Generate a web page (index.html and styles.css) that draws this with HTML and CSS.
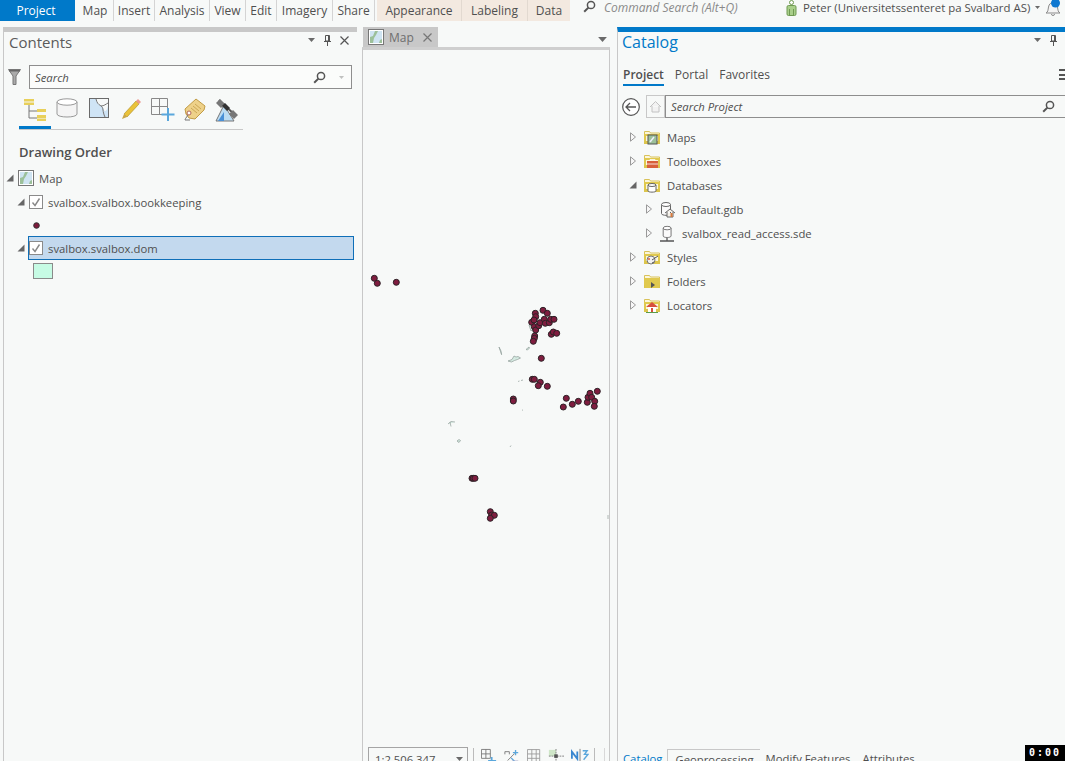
FILE: index.html
```html
<!DOCTYPE html>
<html lang="en">
<head>
    <meta charset="UTF-8">
    <title>ArcGIS Pro</title>
    <link rel="stylesheet" href="styles.css">
</head>
<body>
    <!-- shared icons -->
    <svg class="sprite" width="0" height="0">
        <symbol id="mapdoc" viewBox="0 0 16 16">
            <rect x=".5" y=".5" width="15" height="15" fill="#fff" stroke="#777"/>
            <rect x="2" y="2" width="12" height="12" fill="#cfe4f2"/>
            <path d="M2 14V8l3-1 2-5h3L8 6 6 9l-1 5z" fill="#9cc09a"/>
            <path d="M11 14l1-3 2-1v4z" fill="#9cc09a"/>
        </symbol>
        <symbol id="folder" viewBox="0 0 16 16">
            <path d="M.5 2.5h5l1 1.5h9v10H.5z" fill="#fbf6dc" stroke="#d9c25a"/>
            <path d="M1 6h14v8H1z" fill="none" stroke="#e0c94e" stroke-width="2"/>
            <path d="M0 12h16v3H0z" fill="#dcc54c"/>
        </symbol>
        <symbol id="db" viewBox="0 0 16 16">
            <path d="M2.5 3.5v9c0 2.4 9 2.4 9 0v-9" fill="#fafafa" stroke="#666"/>
            <ellipse cx="7" cy="3.5" rx="4.5" ry="2" fill="#fff" stroke="#666"/>
        </symbol>
        <symbol id="tri-open" viewBox="0 0 8 8"><path d="M7.5 .5v7h-7z" fill="#666"/></symbol>
        <symbol id="tri-closed" viewBox="0 0 8 10"><path d="M1.5 .8l5 4.2-5 4.2z" fill="#f7f7f7" stroke="#999"/></symbol>
        <symbol id="lens" viewBox="0 0 13 13"><circle cx="8" cy="5" r="3.6" fill="none" stroke="#555" stroke-width="1.5"/><path d="M5.4 7.6L1.2 11.8" stroke="#555" stroke-width="2"/></symbol>
        <symbol id="check" viewBox="0 0 14 14"><rect x=".5" y=".5" width="13" height="13" fill="#fff" stroke="#8a8a8a"/><path d="M3.500 7.500l2.500 3 4.500-7" fill="none" stroke="#888" stroke-width="1.400"/></symbol>
        <symbol id="caret" viewBox="0 0 7 4"><path d="M0 0h7L3.500 4z" fill="#6a6a6a"/></symbol>
        <symbol id="pin" viewBox="0 0 7 11"><path d="M1.500 .5h4v5.500h-4zM0 6.500h7M3.500 7v4M4.500 1v5" fill="none" stroke="#555"/></symbol>
    </svg>

    <header class="ribbon">
        <div class="tab-project">Project</div>
        <nav class="ribbon-tabs">
            <span class="rtab">Map</span>
            <span class="rtab">Insert</span>
            <span class="rtab">Analysis</span>
            <span class="rtab">View</span>
            <span class="rtab">Edit</span>
            <span class="rtab">Imagery</span>
            <span class="rtab">Share</span>
        </nav>
        <nav class="context-tabs">
            <span class="ctab">Appearance</span>
            <span class="ctab">Labeling</span>
            <span class="ctab">Data</span>
        </nav>
        <div class="command-search">
            <svg width="13" height="13"><use href="#lens"/></svg>
            <span>Command Search (Alt+Q)</span>
        </div>
        <div class="user">
            <svg width="11" height="16" viewBox="0 0 11 16"><circle cx="5.500" cy="2.500" r="2" fill="#fff" stroke="#6f9a52"/><rect x="1" y="5.500" width="9" height="10" rx="1.500" fill="#a9cf8a" stroke="#6f9a52"/><path d="M3.500 9v6M7.500 9v6" stroke="#6f9a52"/></svg>
            <span>Peter (Universitetssenteret pa Svalbard AS)</span>
            <svg class="user-caret" width="5" height="3"><use href="#caret"/></svg>
        </div>
        <div class="bell">
            <svg width="17" height="16" viewBox="0 0 17 16"><path d="M1 13c2-1 2-3 2.500-6S6 2.500 8 2.500 12 4 12.500 7s.5 5 2.500 6z" fill="#f4f4f4" stroke="#8a8a8a"/><path d="M6.500 14a1.500 1.500 0 0 0 3 0" fill="none" stroke="#8a8a8a"/><circle cx="10.500" cy="3" r="4.500" fill="#0f78d0"/></svg>
        </div>
    </header>

    <main class="panes">
        <section class="pane contents">
            <div class="pane-head">
                <h2 class="pane-title">Contents</h2>
                <div class="pane-tools">
                    <svg width="7" height="4"><use href="#caret"/></svg>
                    <svg width="7" height="11"><use href="#pin"/></svg>
                    <svg width="9" height="9" viewBox="0 0 9 9"><path d="M.5 .5l8 8M8.500 .5l-8 8" stroke="#555" stroke-width="1.200"/></svg>
                </div>
            </div>
            <div class="filter-row">
                <svg width="13" height="16" viewBox="0 0 13 16"><path d="M.5 .5h12L8 7v8.500H5V7z" fill="#aaa" stroke="#777"/><path d="M1 1h11v1.500H1z" fill="#666"/></svg>
                <div class="searchbox">
                    <span class="search-text">Search</span>
                    <svg class="search-lens" width="13" height="13"><use href="#lens"/></svg>
                    <svg class="search-caret" width="5" height="3"><use href="#caret"/></svg>
                </div>
            </div>
            <div class="toc-tools">
                <span class="toc-tool toc-active"><svg width="23" height="24" viewBox="0 0 23 24"><path d="M5 7v13h8M5 13h8" fill="none" stroke="#777"/><path d="M0 1h10v2.500H0zM0 4.500h10V7H0z" fill="#e8d05a"/><path d="M13 11h9v3h-9zM13 17h9v3h-9zM13 20.500h9v2.500h-9z" fill="#e8d05a"/></svg></span>
                <span class="toc-tool"><svg width="22" height="20" viewBox="0 0 22 20"><path d="M1 4v12c0 4 20 4 20 0V4" fill="#f4f4f4" stroke="#999"/><ellipse cx="11" cy="4" rx="10" ry="3.200" fill="#fff" stroke="#999"/></svg></span>
                <span class="toc-tool"><svg width="20" height="20" viewBox="0 0 20 20"><rect x=".5" y=".5" width="19" height="19" fill="#cfe4f5" stroke="#6a6a6a"/><path d="M7 1c1 4 2 5 5 7s3 3 3 4 3 3 4-5V1z" fill="#f7f9f8"/><path d="M7 1c1 4 2 5 5 7 3 2 1 5 4 11M12 8c3 0 5-2 7-3" fill="none" stroke="#777"/></svg></span>
                <span class="toc-tool"><svg width="21" height="22" viewBox="0 0 21 22"><path d="M3 16L15 3l3 3L6 19z" fill="#eac23a" stroke="#a98a20" stroke-width=".6"/><path d="M15 3l2-2 3 3-2 2z" fill="#eb9a8f"/><path d="M3 16l-2 5 5-2z" fill="#caa74a"/></svg></span>
                <span class="toc-tool"><svg width="24" height="23" viewBox="0 0 24 23"><path d="M.5 .5h16v16H.5zM8.500 .5v16M.5 8.500h16" fill="#f7f9f8" stroke="#888"/><path d="M17 10v13M10.500 16.500h13" stroke="#5aa7dc" stroke-width="2"/></svg></span>
                <span class="toc-tool"><svg width="22" height="23" viewBox="0 0 22 23"><path d="M1 11L12 1l9 7-1 4-9 9-6-1-3-4z" fill="#eed189" stroke="#c19c46"/><path d="M11 6l6 5M9 8l6 5M7 10l6 5" stroke="#c19c46" stroke-width=".8"/><circle cx="5" cy="15" r="2" fill="#fff" stroke="#b0655a"/><path d="M4 17c-2 3-3 4-3 5h5" fill="none" stroke="#777"/></svg></span>
                <span class="toc-tool"><svg width="24" height="24" viewBox="0 0 24 24"><path d="M1 23L9 7l10 16z" fill="#bcdcf2" stroke="#777"/><path d="M3 23l6-9v9z" fill="#4a90d6"/><path d="M4 2l16 15" stroke="#555" stroke-width="2"/><path d="M5 1L1 5l5 5 4-4zM18 12l-4 4 5 5 4-4z" fill="#777"/><path d="M10 5l5 5-3 3-5-5z" fill="#333"/></svg></span>
            </div>
            <h3 class="order-title">Drawing Order</h3>
            <ul class="toc-tree">
                <li class="toc-row toc-map">
                    <svg class="tri" width="8" height="8"><use href="#tri-open"/></svg>
                    <svg width="16" height="16"><use href="#mapdoc"/></svg>
                    <span>Map</span>
                </li>
                <li class="toc-row toc-layer">
                    <svg class="tri" width="8" height="8"><use href="#tri-open"/></svg>
                    <svg width="14" height="14"><use href="#check"/></svg>
                    <span>svalbox.svalbox.bookkeeping</span>
                </li>
                <li class="toc-symbol">
                    <svg width="7" height="7" viewBox="0 0 7 7"><circle cx="3.500" cy="3.500" r="2.800" fill="#7d1a3c" stroke="#333"/></svg>
                </li>
                <li class="toc-row toc-layer toc-selected">
                    <svg class="tri" width="8" height="8"><use href="#tri-open"/></svg>
                    <svg width="14" height="14"><use href="#check"/></svg>
                    <span>svalbox.svalbox.dom</span>
                </li>
                <li class="toc-swatch"><span class="swatch"></span></li>
            </ul>
        </section>

        <section class="mapview">
            <div class="view-tabs">
                <div class="view-tab">
                    <svg width="16" height="16"><use href="#mapdoc"/></svg>
                    <span>Map</span>
                    <svg class="view-close" width="9" height="9" viewBox="0 0 9 9"><path d="M.5 .5l8 8M8.500 .5l-8 8" stroke="#777" stroke-width="1.200"/></svg>
                </div>
                <svg class="view-caret" width="9" height="5"><use href="#caret"/></svg>
            </div>
            <div class="view-frame">
                <svg class="map-canvas" width="246" height="695" viewBox="363 50 246 695">
                    <g fill="#d5ebe2" stroke="#8f9c98" stroke-width=".7">
                        <path d="M499 347l2 4 .6 3.700-1.200-3.500z"/>
                        <path d="M508 361l4-1.500 2-3.500 2 1 2-.5 2.500 1.500-3 1.500-3 1-3 1.500z"/>
                        <path d="M526 349.500l3-2.500.5 1-2 2z"/>
                        <path d="M529 325l3-2 1 6-2 2z"/>
                        <path d="M518 381.500l1.500-.5M521 380.500l2-.5"/>
                        <path d="M522 410.500l1-.8"/>
                        <path d="M448 424l3-2.500 4 .5M450 422l1 4.500"/>
                        <path d="M457 441l2-1.500 1.500 1-1.500 2z"/>
                        <path d="M510 447l1-1.500"/>
                        <path d="M608 515v4"/>
                    </g>
                    <g fill="#7f1d3f" stroke="#2c2226">
                        <circle cx="374.300" cy="278.300" r="3"/><circle cx="377.300" cy="283.300" r="3"/><circle cx="396.300" cy="282.300" r="3"/>
                        <circle cx="535.300" cy="313.300" r="3"/><circle cx="535.700" cy="316.700" r="3"/><circle cx="543" cy="310.300" r="3"/><circle cx="547.300" cy="313.300" r="3"/>
                        <circle cx="531.700" cy="322.300" r="3"/><circle cx="534.300" cy="326.700" r="3"/><circle cx="535.700" cy="330" r="3"/><circle cx="538.700" cy="325.700" r="3"/>
                        <circle cx="540" cy="322.700" r="3"/><circle cx="544.300" cy="319.300" r="3"/><circle cx="545.300" cy="323.300" r="3"/><circle cx="549.300" cy="322.700" r="3"/>
                        <circle cx="550.700" cy="319.300" r="3"/><circle cx="554" cy="319.300" r="3"/><circle cx="534" cy="320" r="3"/>
                        <circle cx="551.300" cy="334.300" r="3"/><circle cx="553.300" cy="332" r="3"/><circle cx="556.700" cy="333.300" r="3"/>
                        <circle cx="534.700" cy="336" r="3"/><circle cx="534.300" cy="338.300" r="3"/><circle cx="533.300" cy="341.300" r="3"/>
                        <circle cx="541.300" cy="358.300" r="3"/>
                        <circle cx="532.300" cy="379.300" r="3"/><circle cx="534.300" cy="379.300" r="3"/><circle cx="540.300" cy="382.300" r="3"/><circle cx="538.300" cy="385.700" r="3"/><circle cx="547.300" cy="386.300" r="3"/>
                        <circle cx="513.300" cy="399" r="3"/><circle cx="513.300" cy="401" r="3"/>
                        <circle cx="566.300" cy="398.300" r="3"/><circle cx="563.300" cy="407" r="3"/><circle cx="572.300" cy="404.300" r="3"/><circle cx="578.300" cy="401.300" r="3"/>
                        <circle cx="587.300" cy="402.300" r="3"/><circle cx="588" cy="397.300" r="3"/><circle cx="590" cy="393.300" r="3"/><circle cx="591.700" cy="397.300" r="3"/>
                        <circle cx="597.300" cy="391.300" r="3"/><circle cx="594.700" cy="401.300" r="3"/><circle cx="594.300" cy="406.300" r="3"/>
                        <circle cx="472" cy="478.300" r="3"/><circle cx="473.300" cy="478.300" r="3"/><circle cx="475" cy="478.300" r="3"/>
                        <circle cx="490.300" cy="511.700" r="3"/><circle cx="491.700" cy="515" r="3"/><circle cx="494.300" cy="515.300" r="3"/><circle cx="490.300" cy="518.300" r="3"/>
                    </g>
                </svg>
                <div class="map-status">
                    <div class="scale-box"><span>1:2,506,347</span><svg width="7" height="4"><use href="#caret"/></svg></div>
                    <span class="status-sep"></span>
                    <svg width="16" height="18" viewBox="0 0 18 18"><path d="M.5 .5h10v10H.5zM5.500 .5v10M.5 5.500h10" fill="none" stroke="#777"/><path d="M12 9v9M8 13.500h9" stroke="#5aa7dc" stroke-width="2"/></svg>
                    <svg width="16" height="18" viewBox="0 0 18 18"><path d="M1 3h5M1 3v3M6 3v3M4 13l8-8" fill="none" stroke="#777"/><path d="M8 10l4 4M13 1v6M10 4h6" stroke="#5aa7dc" stroke-width="1.500"/><path d="M9 13h7v3H9z" fill="#aac"/></svg>
                    <svg width="14" height="18" viewBox="0 0 16 18"><path d="M.5 .5h14v14H.5zM5.500 .5v14M10.500 .5v14M.5 5.500h14M.5 10.500h14" fill="none" stroke="#999"/></svg>
                    <svg width="16" height="18" viewBox="0 0 18 18"><path d="M1 1h8v7H1z" fill="#cfe6c8"/><path d="M9 0v8M1 8h17M9 8v8" stroke="#777" stroke-dasharray="2 1"/><path d="M7 6h4v4H7z" fill="#555"/></svg>
                    <svg width="18" height="18" viewBox="0 0 20 18"><path d="M1 11V3l6 8V3" fill="none" stroke="#3a87d0" stroke-width="2"/><path d="M10 0v18" stroke="#777"/><path d="M13 2h5l-3 4h4l-5 6" fill="none" stroke="#5aa7dc" stroke-width="1.500"/></svg>
                    <span class="status-sep"></span>
                    <span class="status-sep status-faint"></span>
                </div>
            </div>
        </section>

        <section class="pane catalog">
            <div class="pane-head">
                <h2 class="pane-title catalog-title">Catalog</h2>
                <div class="pane-tools">
                    <svg width="7" height="4"><use href="#caret"/></svg>
                    <svg width="7" height="11"><use href="#pin"/></svg>
                </div>
            </div>
            <div class="cat-tabs">
                <span class="cat-tab cat-tab-active">Project</span>
                <span class="cat-tab">Portal</span>
                <span class="cat-tab">Favorites</span>
                <span class="hamburger"></span>
            </div>
            <div class="cat-search">
                <svg class="cat-back" width="18" height="18" viewBox="0 0 18 18"><circle cx="9" cy="9" r="8.300" fill="#fff" stroke="#555" stroke-width="1.200"/><path d="M14 9H4M8 5L4 9l4 4" fill="none" stroke="#555" stroke-width="1.300"/></svg>
                <span class="cat-home"><svg width="13" height="13" viewBox="0 0 13 13"><path d="M1 7l5.500-5.500L12 7M3 6v6h7V6" fill="#f2f2f2" stroke="#c2c2c2"/></svg></span>
                <div class="cat-input">
                    <span class="search-text">Search Project</span>
                    <svg class="search-lens" width="13" height="13"><use href="#lens"/></svg>
                </div>
            </div>
            <ul class="cat-tree">
                <li class="cat-row">
                    <svg class="tri" width="8" height="10"><use href="#tri-closed"/></svg>
                    <svg width="16" height="16" viewBox="0 0 16 16"><use href="#folder" width="16" height="16"/><rect x="4" y="6" width="9" height="9" fill="#9cc09a" stroke="#555"/><path d="M6 13l4-5" stroke="#eef" stroke-width="1.500"/></svg>
                    <span>Maps</span>
                </li>
                <li class="cat-row">
                    <svg class="tri" width="8" height="10"><use href="#tri-closed"/></svg>
                    <svg width="16" height="16" viewBox="0 0 16 16"><use href="#folder" width="16" height="16"/><rect x="3" y="8" width="11" height="7" fill="#d8603c"/><path d="M6 8V6.500h5V8M3 11h11" fill="none" stroke="#fff" stroke-width=".8"/></svg>
                    <span>Toolboxes</span>
                </li>
                <li class="cat-row">
                    <svg class="tri" width="8" height="8"><use href="#tri-open"/></svg>
                    <svg width="16" height="16" viewBox="0 0 16 16"><use href="#folder" width="16" height="16"/><path d="M4 8v6c0 1.500 8 1.500 8 0V8" fill="#fff" stroke="#666"/><ellipse cx="8" cy="8" rx="4" ry="1.500" fill="#fff" stroke="#666"/></svg>
                    <span>Databases</span>
                </li>
                <li class="cat-row cat-child">
                    <svg class="tri" width="8" height="10"><use href="#tri-closed"/></svg>
                    <svg width="17" height="17" viewBox="0 0 17 17"><use href="#db" width="16" height="16"/><path d="M6 12l5-4 5 4M8 11v5h6v-5" fill="#f4f0e8" stroke="#666"/><path d="M11.500 12h2v4h-2z" fill="#d87a3c"/></svg>
                    <span>Default.gdb</span>
                </li>
                <li class="cat-row cat-child">
                    <svg class="tri" width="8" height="10"><use href="#tri-closed"/></svg>
                    <svg width="17" height="17" viewBox="0 0 17 17"><use href="#db" width="16" height="14" x="1"/><path d="M8 13v3M1 16h14" stroke="#555" stroke-width="1.300"/></svg>
                    <span>svalbox_read_access.sde</span>
                </li>
                <li class="cat-row">
                    <svg class="tri" width="8" height="10"><use href="#tri-closed"/></svg>
                    <svg width="16" height="16" viewBox="0 0 16 16"><use href="#folder" width="16" height="16"/><circle cx="7" cy="11" r="4" fill="#f2f2f2" stroke="#777"/><path d="M8 11l6-4M8 14l2-1" stroke="#555"/><circle cx="5" cy="10" r="1" fill="#d8603c"/></svg>
                    <span>Styles</span>
                </li>
                <li class="cat-row">
                    <svg class="tri" width="8" height="10"><use href="#tri-closed"/></svg>
                    <svg width="16" height="16" viewBox="0 0 16 16"><use href="#folder" width="16" height="16"/><path d="M1 6h14v9H1z" fill="#e0c94e"/><path d="M7 9l4 3-4 3z" fill="#555"/></svg>
                    <span>Folders</span>
                </li>
                <li class="cat-row">
                    <svg class="tri" width="8" height="10"><use href="#tri-closed"/></svg>
                    <svg width="16" height="16" viewBox="0 0 16 16"><use href="#folder" width="16" height="16"/><path d="M2 10l6-5 6 5z" fill="#d8503c"/><path d="M4 10h8v5H4z" fill="#fff"/><path d="M7 11h2v4H7z" fill="#d8503c"/><path d="M2 15.500h12" stroke="#5a9c4a"/></svg>
                    <span>Locators</span>
                </li>
            </ul>
            <div class="bottom-tabs">
                <span class="bottom-tab bottom-active">Catalog</span>
                <span class="bottom-tab bottom-first">Geoprocessing</span>
                <span class="bottom-tab">Modify Features</span>
                <span class="bottom-tab">Attributes</span>
            </div>
        </section>
    </main>

    <div class="timer">0:00</div>
</body>
</html>
```

FILE: styles.css
```css
* {box-sizing: border-box}
html, body {
    height: 100%;
}
body {
    margin: 0;
    overflow: hidden;
    position: relative;
    background-color: #f7f9f8;
    color: #4f4f4f;
    font-family: "Open Sans", "Noto Sans", Arial, sans-serif;
    font-size: 11.3px;
}
svg {
    display: block;
    flex: none;
}
ul {
    list-style-type: none;
    margin: 0;
    padding: 0;
}
.sprite {
    position: absolute;
}

/* Ribbon */
.ribbon {
    display: flex;
    height: 21px;
    margin-bottom: 6px;
    font-size: 12px;
    line-height: 21px;
}
.tab-project {
    width: 75px;
    padding-right: 3px;
    background-color: #0079c9;
    color: white;
    text-align: center;
}
.ribbon-tabs {
    display: grid;
    grid-template-columns: 37px 41px 55px 36px 31px 56px 42px;
    margin-left: 2px;
    text-align: center;
}
.rtab {
    border-right: 1px solid #d4d4d4;
}
.context-tabs {
    display: grid;
    grid-template-columns: 85px 66px 42px;
    margin-left: 2px;
    background-color: #f3e9e0;
    text-align: center;
}
.ctab {
    border-right: 1px solid #e2d9d0;
}
.ctab:last-child {
    border-right: none;
}
.command-search {
    display: flex;
    gap: 8px;
    width: 203px;
    margin-left: 13px;
    color: #8a8a8a;
    font-style: italic;
    line-height: 15px;
}
.user {
    display: flex;
    align-items: flex-start;
    gap: 6px;
    width: 259px;
    font-size: 11.4px;
    line-height: 15px;
    white-space: nowrap;
}
.user-caret {
    margin: 6px 0 0 -1px;
}
.bell {
    margin-left: 0;
}

/* Panes */
.panes {
    display: flex;
    height: 734px;
    overflow: hidden;
}
.pane {
    display: flex;
    flex-direction: column;
    overflow: hidden;
    border-top: 5px solid #c8c8c8;
}
.pane > *, .mapview > * {
    flex: none;
}
.contents {
    width: 354px;
    margin-left: 3px;
    border-left: 1px solid #c8c8c8;
}
.catalog {
    flex: 1;
    margin-left: 7px;
    border-left: 1px solid #c8c8c8;
    border-top-color: #0079c9;
}
.pane-head {
    display: flex;
    justify-content: space-between;
    height: 25px;
    padding: 0 8px 0 5px;
}
.pane-title {
    margin: 0;
    font-size: 15px;
    font-weight: normal;
    line-height: 21px;
    color: #5b5b5b;
}
.catalog-title {
    margin-left: -1px;
    font-size: 16px;
    color: #0079c9;
}
.pane-tools {
    display: flex;
    align-items: center;
    gap: 9px;
    height: 10px;
    margin-top: 3px;
}

/* Contents pane */
.filter-row {
    display: flex;
    align-items: center;
    gap: 8px;
    margin: 8px 5px 0 4px;
}
.searchbox {
    display: flex;
    align-items: center;
    justify-content: space-between;
    flex: 1;
    height: 24px;
    padding: 0 7px 0 5px;
    border: 1px solid #8e8e8e;
    background-color: #fbfcfb;
}
.search-text {
    flex: 1;
    font-style: italic;
    color: #4f4f4f;
}
.search-caret {
    margin-left: 13px;
    opacity: .4;
}
.toc-tools {
    display: flex;
    width: 224px;
    margin: 8px 0 0 15px;
    border-bottom: 1px solid #c8c8c8;
}
.toc-tool {
    display: flex;
    justify-content: center;
    align-items: flex-start;
    width: 32px;
    height: 32px;
    padding-top: 1px;
}
.toc-active {
    border-bottom: 3px solid #0079c9;
}
.order-title {
    margin: 12px 0 0 15px;
    font-size: 13px;
    font-weight: 600;
    line-height: 20px;
    color: #4f4f4f;
}
.toc-tree {
    margin-top: 4px;
}
.toc-row {
    display: flex;
    align-items: center;
    height: 24px;
    gap: 4px;
}
.tri {
    flex: none;
}
.toc-map {
    padding-left: 2px;
}
.toc-map span {
    margin-left: 1px;
}
.toc-layer {
    padding-left: 13px;
    margin-right: 3px;
}
.toc-layer span {
    margin-left: 1px;
}
.toc-symbol {
    display: flex;
    align-items: center;
    height: 22px;
    padding-left: 29px;
}
.toc-selected {
    margin-left: 24px;
    padding-left: 0;
    background-color: #c3d9ee;
    border: 1px solid #0f6fb8;
}
.toc-selected .tri {
    margin-left: -12px;
}
.toc-swatch {
    padding: 3px 0 0 29px;
}
.swatch {
    display: block;
    width: 20px;
    height: 16px;
    background-color: #c6fbe4;
    border: 1px solid #8a8a8a;
}

/* Map view */
.mapview {
    display: flex;
    flex-direction: column;
    width: 248px;
    margin-left: 5px;
}
.view-tabs {
    display: flex;
    justify-content: space-between;
    height: 20px;
}
.view-tab {
    display: flex;
    align-items: center;
    gap: 5px;
    width: 75px;
    margin-left: 1px;
    padding-left: 5px;
    background-color: #c8c8c8;
    color: #6e6e6e;
    font-size: 12px;
}
.view-close {
    margin-left: 4px;
}
.view-caret {
    margin: 10px 3px 0 0;
}
.view-frame {
    border-top: 3px solid #cfcfcf;
    border-left: 1px solid #c8c8c8;
    border-right: 1px solid #c8c8c8;
    height: 714px;
    overflow: hidden;
}
.map-status {
    display: flex;
    align-items: flex-start;
    gap: 7px;
    padding: 2px 0 0 5px;
}
.scale-box {
    display: flex;
    align-items: center;
    justify-content: space-between;
    width: 100px;
    height: 24px;
    padding: 0 4px 0 6px;
    border: 1px solid #a5a5a5;
    flex: none;
}
.status-sep {
    flex: none;
    width: 1px;
    height: 16px;
    margin: 1px 0 0 -2px;
    background-color: #bbb;
}
.status-faint {
    background-color: #d8d8d8;
    margin-left: 2px;
}
.map-status svg {
    margin-top: 1px;
}
.scale-box svg {
    margin-top: 0;
}

/* Catalog pane */
.cat-tabs {
    display: flex;
    gap: 11px;
    height: 27px;
    margin-top: 7px;
    padding-left: 5px;
    position: relative;
    font-size: 12px;
}
.cat-tab {
    height: 22px;
    line-height: 21px;
}
.cat-tab-active {
    border-bottom: 2px solid #0079c9;
    font-weight: 600;
}
.hamburger {
    position: absolute;
    right: 0;
    top: 5px;
    width: 6px;
    height: 11px;
    border-top: 2px solid #555;
    border-bottom: 2px solid #555;
    background: linear-gradient(#555, #555) center / 100% 2px no-repeat;
}
.cat-search {
    display: flex;
    align-items: center;
    height: 23px;
    margin-top: 4px;
    padding-left: 4px;
}
.cat-back {
    margin-right: 6px;
}
.cat-home {
    display: flex;
    align-items: center;
    justify-content: center;
    width: 19px;
    height: 23px;
    border: 1px solid #c8c8c8;
}
.cat-input {
    display: flex;
    align-items: center;
    flex: 1;
    height: 23px;
    padding: 0 10px 0 5px;
    border: 1px solid #8e8e8e;
    border-right: none;
}
.cat-tree {
    height: 631px;
    padding-top: 7px;
}
.cat-row {
    display: flex;
    align-items: center;
    height: 24px;
    padding-left: 11px;
}
.cat-row .tri {
    width: 8px;
    margin-right: 7px;
}
.cat-row span {
    margin-left: 7px;
}
.cat-child {
    padding-left: 27px;
}
.cat-child .tri {
    margin-right: 6px;
}
.cat-child span {
    margin-left: 6px;
}
.bottom-tabs {
    display: flex;
    height: 24px;
    padding-left: 5px;
}
.bottom-tab {
    padding: 2px 6px 0;
    font-size: 11.3px;
}
.bottom-active {
    padding-left: 0;
    padding-right: 5px;
    color: #0079c9;
}
.bottom-first {
    padding-left: 7px;
    border-left: 1px solid #c8c8c8;
    border-top: 1px solid #c8c8c8;
}

/* Recording timer over the corner */
.timer {
    position: absolute;
    right: 0;
    bottom: 0;
    width: 40px;
    height: 16px;
    background-color: black;
    color: white;
    font-family: "DejaVu Sans Mono", monospace;
    font-size: 10px;
    font-weight: bold;
    line-height: 15px;
    text-align: center;
    letter-spacing: 2px;
}
```
